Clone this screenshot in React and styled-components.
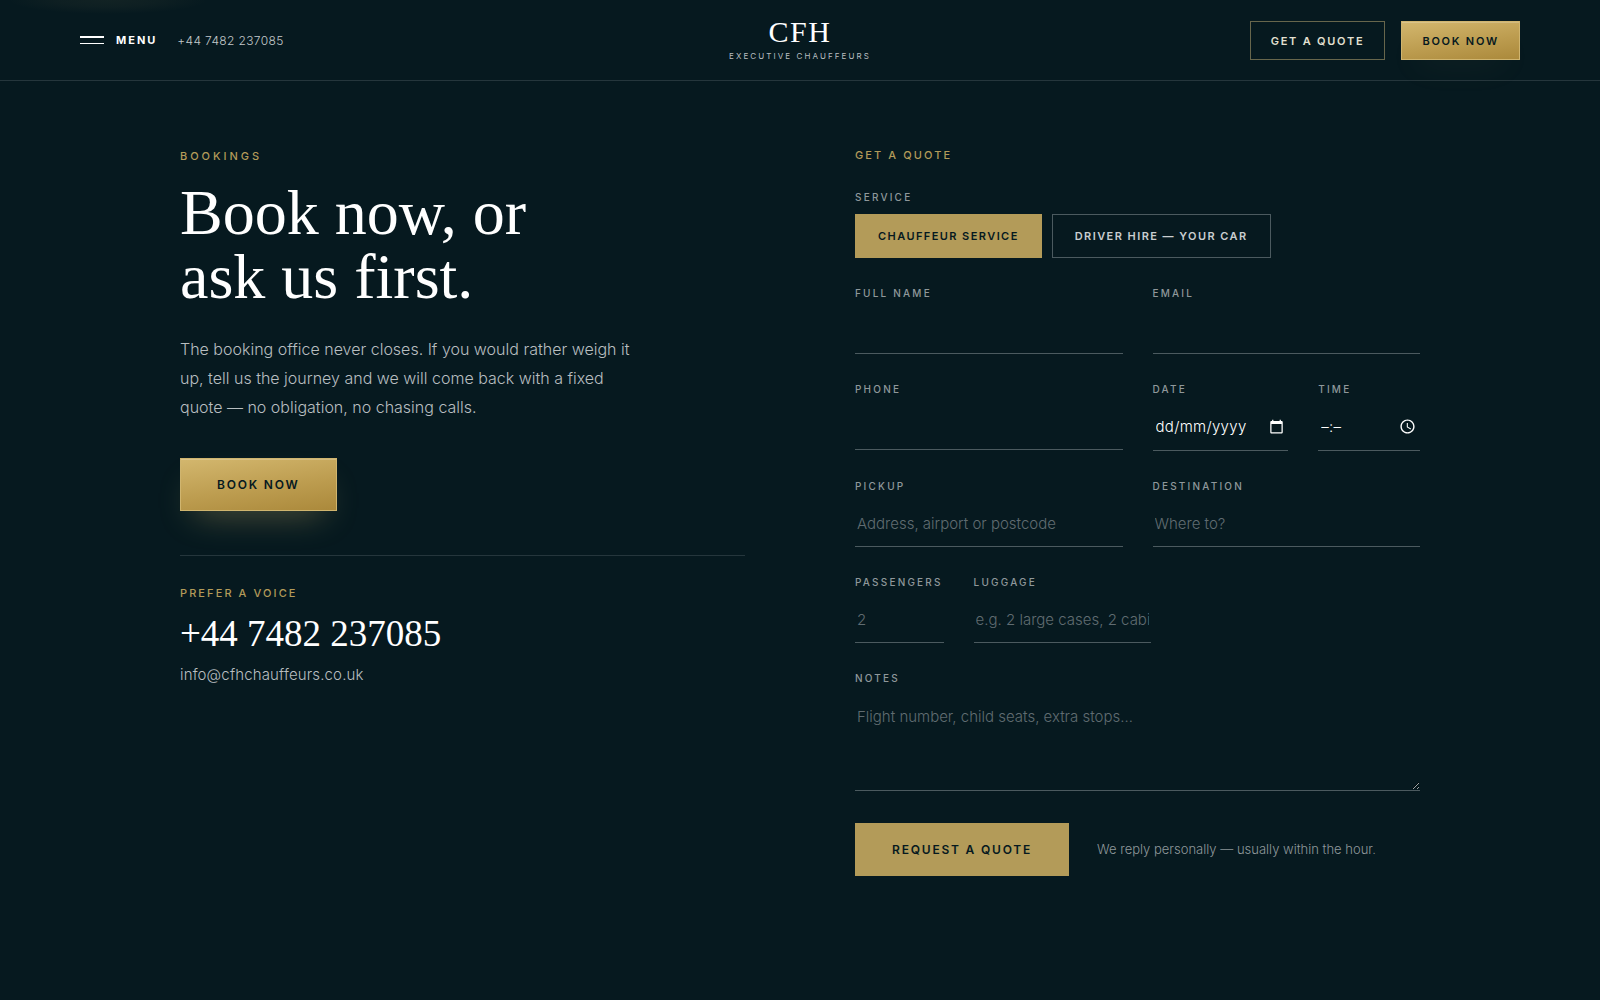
import React, { useState } from "react";
import styled, { createGlobalStyle, css } from "styled-components";

const c = {
  ink: "#06191f",
  gold: "#b39b59",
  white: "#ffffff",
  soft: "#b8bec0",
  muted: "#8f989b",
  faint: "#606c71",
  line: "#25363c",
  field: "#4b5a5f",
};
const sans = `Inter, "Open Sans", sans-serif`;
const serif = `"Liberation Serif", "Times New Roman", serif`;

const Global = createGlobalStyle`
  *, *::before, *::after { box-sizing: border-box; }
  html { background: ${c.ink}; color-scheme: dark; }
  body {
    margin: 0;
    font-family: ${sans};
    font-weight: 300;
    color: ${c.white};
    -webkit-font-smoothing: antialiased;
  }
  a { color: inherit; text-decoration: none; }
  button, input, textarea { font-family: inherit; }
`;

const goldFace = css`
  color: ${c.ink};
  background: linear-gradient(172deg, #d3b76e 0%, #bd9d50 55%, #ab893b 100%);
  border: 1px solid #d0b56f;
  box-shadow: inset 0 1px 0 rgba(255, 255, 255, 0.2), 0 16px 34px -14px rgba(211, 183, 110, ${(p) => p.$glow || 0.42});
`;
const outlineFace = css`
  color: #e3e0d2;
  background: transparent;
  border: 1px solid #67664c;
`;
const flatFace = css`
  color: ${c.ink};
  background: ${c.gold};
  border: 1px solid ${c.gold};
`;
const faces = { gold: goldFace, outline: outlineFace, flat: flatFace };

const buttonText = css`
  display: inline-flex;
  align-items: center;
  justify-content: center;
  font-family: ${sans};
  font-weight: 600;
  text-transform: uppercase;
  white-space: nowrap;
  cursor: pointer;
`;
const Action = styled.button`
  ${buttonText}
  height: ${(p) => (p.$small ? 39 : 53)}px;
  padding: ${(p) => (p.$small ? "2px 20px 0" : "0 36px")};
  font-size: ${(p) => (p.$small ? 11 : 12)}px;
  letter-spacing: ${(p) => (p.$small ? 0.16 : 0.15)}em;
  ${(p) => faces[p.$face]}
`;

const Header = styled.header`
  position: relative;
  display: grid;
  grid-template-columns: 1fr auto 1fr;
  align-items: center;
  height: 81px;
  padding: 0 5%;
  border-bottom: 1px solid ${c.line};
  &::before {
    content: "";
    position: absolute;
    top: 0;
    left: 8px;
    width: 200px;
    height: 14px;
    background: radial-gradient(50% 100% at 50% 0, rgba(211, 183, 110, 0.06), rgba(211, 183, 110, 0.04) 50%, transparent);
  }
`;
const HeaderSide = styled.div`
  display: flex;
  align-items: center;
  justify-content: ${(p) => (p.$end ? "flex-end" : "flex-start")};
  gap: ${(p) => (p.$end ? 16 : 20)}px;
`;
const MenuButton = styled.button`
  display: flex;
  align-items: center;
  gap: 12px;
  padding: 0;
  border: 0;
  background: none;
  color: ${c.white};
  font-size: 11px;
  font-weight: 700;
  letter-spacing: 0.18em;
  cursor: pointer;
`;
const HeaderPhone = styled.a`
  font-size: 12px;
  letter-spacing: 0.03em;
  color: #c3c9cb;
`;
const Logo = styled.a`
  display: flex;
  flex-direction: column;
  align-items: center;
`;
const LogoName = styled.span`
  font-family: ${serif};
  font-size: 30px;
  line-height: 32px;
  letter-spacing: 0.05em;
`;
const LogoLine = styled.span`
  font-size: 8px;
  line-height: 16px;
  font-weight: 400;
  letter-spacing: 0.26em;
  color: ${c.soft};
`;

const Main = styled.main`
  display: grid;
  grid-template-columns: 1fr 1fr;
  gap: 110px;
  max-width: 1240px;
  margin: 0 auto;
  padding: 66px 0 80px;
`;
const Eyebrow = styled.h2`
  margin: 0;
  font-size: 11px;
  line-height: ${(p) => (p.$wide ? 19 : 17)}px;
  font-weight: 500;
  letter-spacing: ${(p) => (p.$wide ? "0.27em" : "0.19em")};
  text-transform: uppercase;
  color: ${c.gold};
`;
const Title = styled.h1`
  margin: 15px 0 26px;
  font-family: ${serif};
  font-size: 64px;
  line-height: 64px;
  font-weight: 400;
`;
const Lead = styled.p`
  max-width: 460px;
  margin: 0 0 36px;
  font-size: 16px;
  line-height: 29px;
  color: ${c.soft};
`;
const Voice = styled.section`
  display: flex;
  flex-direction: column;
  align-items: flex-start;
  margin-top: 44px;
  padding-top: 29px;
  border-top: 1px solid ${c.line};
`;
const BigPhone = styled.a`
  margin: 10px 0 9px;
  font-family: ${serif};
  font-size: 37px;
  line-height: 44px;
`;
const Email = styled.a`
  font-size: 15px;
  line-height: 20px;
  letter-spacing: 0.01em;
  color: ${c.soft};
`;

const Form = styled.form`
  display: grid;
  gap: 27px;
`;
const FormIntro = styled.div`
  display: grid;
  gap: 25px;
`;
const Row = styled.div`
  display: grid;
  grid-template-columns: ${(p) => p.$cols || "1fr 1fr"};
  align-items: start;
  gap: 30px;
`;
const FieldBox = styled.div`
  display: grid;
  gap: 7px;
  min-width: 0;
`;
const labelText = css`
  font-size: 10px;
  line-height: 17px;
  font-weight: 500;
  letter-spacing: 0.22em;
  text-transform: uppercase;
  color: ${c.muted};
`;
const Label = styled.label`
  ${labelText}
`;
const control = css`
  width: 100%;
  min-width: 0;
  padding: 9px 2px 11px;
  border: 0;
  border-bottom: 1px solid ${c.field};
  border-radius: 0;
  background: transparent;
  color: ${c.white};
  font-size: 15px;
  font-weight: 300;
  outline: none;
  &::placeholder { color: ${c.faint}; opacity: 1; }
  &:focus { border-color: ${c.gold}; }
`;
const Input = styled.input`
  ${control}
  height: 45px;
`;
const PickerBox = styled.div`
  display: flex;
  align-items: center;
  height: 46px;
  padding-right: 4px;
  border-bottom: 1px solid ${c.field};
  color: ${c.white};
  svg { flex: none; margin-bottom: 2px; }
`;
const PickerInput = styled.input`
  ${control}
  flex: 1;
  padding-left: 3px;
  border: 0;
  letter-spacing: 0.02em;
  &::placeholder { color: ${c.white}; }
`;
const Area = styled.textarea`
  ${control}
  display: block;
  height: 97px;
  padding-top: 12px;
  line-height: 22px;
  resize: vertical;
`;
const Service = styled.fieldset`
  min-width: 0;
  margin: 0;
  padding: 0;
  border: 0;
`;
const Legend = styled.legend`
  ${labelText}
  padding: 0;
  margin-bottom: 8px;
`;
const Choices = styled.div`
  display: flex;
  gap: 10px;
`;
const Choice = styled.button`
  ${buttonText}
  height: 44px;
  padding: 0 22px;
  font-size: 11px;
  letter-spacing: 0.13em;
  ${(p) => (p.$on ? flatFace : outlineFace)}
  ${(p) => !p.$on && css`border-color: ${c.field}; color: #c9ced0;`}
`;
const Submit = styled.div`
  display: flex;
  align-items: center;
  gap: 28px;
  padding-top: 5px;
`;
const Reply = styled.p`
  margin: 0;
  padding-bottom: 2px;
  font-size: 13px;
  line-height: 20px;
  color: ${c.muted};
`;

const CalendarIcon = () => (
  <svg width="15" height="15" viewBox="0 0 24 24" fill="currentColor" aria-hidden="true">
    <path d="M20 3h-1V1h-2v2H7V1H5v2H4c-1.100 0-2 .9-2 2v16c0 1.100.9 2 2 2h16c1.100 0 2-.9 2-2V5c0-1.100-.9-2-2-2zm0 18H4V8h16v13z" />
  </svg>
);
const ClockIcon = () => (
  <svg width="17" height="17" viewBox="0 0 24 24" fill="currentColor" aria-hidden="true">
    <path d="M11.990 2C6.470 2 2 6.480 2 12s4.470 10 9.990 10C17.520 22 22 17.520 22 12S17.520 2 11.990 2zM12 20c-4.420 0-8-3.580-8-8s3.580-8 8-8 8 3.580 8 8-3.580 8-8 8zm.5-13H11v6l5.250 3.150.75-1.230-4.500-2.670z" />
  </svg>
);

function Field({ id, label, area, ...rest }) {
  return (
    <FieldBox>
      <Label htmlFor={id}>{label}</Label>
      {area ? <Area id={id} {...rest} /> : <Input id={id} type="text" {...rest} />}
    </FieldBox>
  );
}

function PickerField({ id, label, placeholder, icon }) {
  return (
    <FieldBox>
      <Label htmlFor={id}>{label}</Label>
      <PickerBox>
        <PickerInput id={id} type="text" inputMode="numeric" placeholder={placeholder} />
        {icon}
      </PickerBox>
    </FieldBox>
  );
}

export default function App() {
  const [service, setService] = useState("chauffeur");
  return (
    <>
      <Global />
      <Header>
        <HeaderSide>
          <MenuButton type="button">
            <svg width="24" height="9" viewBox="0 0 24 9" aria-hidden="true">
              <path d="M0 0h24v2H0zM0 7h24v1H0z" fill="currentColor" />
            </svg>
            MENU
          </MenuButton>
          <HeaderPhone href="tel:+447482237085">+44 7482 237085</HeaderPhone>
        </HeaderSide>
        <Logo href="#">
          <LogoName>CFH</LogoName>
          <LogoLine>EXECUTIVE CHAUFFEURS</LogoLine>
        </Logo>
        <HeaderSide $end>
          <Action as="a" href="#quote" $small $face="outline">Get a quote</Action>
          <Action type="button" $small $face="gold" $glow={0.1}>Book now</Action>
        </HeaderSide>
      </Header>
      <Main>
        <section>
          <Eyebrow as="p" $wide>Bookings</Eyebrow>
          <Title>Book now, or<br />ask us first.</Title>
          <Lead>
            The booking office never closes. If you would rather weigh it up, tell us the
            journey and we will come back with a fixed quote — no obligation, no chasing calls.
          </Lead>
          <Action type="button" $face="gold">Book now</Action>
          <Voice>
            <Eyebrow>Prefer a voice</Eyebrow>
            <BigPhone href="tel:+447482237085">+44 7482 237085</BigPhone>
            <Email href="mailto:info@cfhchauffeurs.co.uk">info@cfhchauffeurs.co.uk</Email>
          </Voice>
        </section>
        <Form id="quote" onSubmit={(e) => e.preventDefault()}>
          <FormIntro>
            <Eyebrow>Get a quote</Eyebrow>
            <Service>
              <Legend>Service</Legend>
              <Choices>
                <Choice type="button" $on={service === "chauffeur"} aria-pressed={service === "chauffeur"} onClick={() => setService("chauffeur")}>
                  Chauffeur service
                </Choice>
                <Choice type="button" $on={service === "driver"} aria-pressed={service === "driver"} onClick={() => setService("driver")}>
                  Driver hire — your car
                </Choice>
              </Choices>
            </Service>
          </FormIntro>
          <Row>
            <Field id="name" label="Full name" />
            <Field id="email" label="Email" type="email" />
          </Row>
          <Row>
            <Field id="phone" label="Phone" type="tel" />
            <Row $cols="4fr 3fr">
              <PickerField id="date" label="Date" placeholder="dd/mm/yyyy" icon={<CalendarIcon />} />
              <PickerField id="time" label="Time" placeholder="–:–" icon={<ClockIcon />} />
            </Row>
          </Row>
          <Row>
            <Field id="pickup" label="Pickup" placeholder="Address, airport or postcode" />
            <Field id="destination" label="Destination" placeholder="Where to?" />
          </Row>
          <Row $cols="10fr 20fr 27fr">
            <Field id="passengers" label="Passengers" placeholder="2" inputMode="numeric" />
            <Field id="luggage" label="Luggage" placeholder="e.g. 2 large cases, 2 cabin bags" />
          </Row>
          <Field id="notes" label="Notes" area placeholder="Flight number, child seats, extra stops…" />
          <Submit>
            <Action type="submit" $face="flat">Request a quote</Action>
            <Reply>We reply personally — usually within the hour.</Reply>
          </Submit>
        </Form>
      </Main>
    </>
  );
}
